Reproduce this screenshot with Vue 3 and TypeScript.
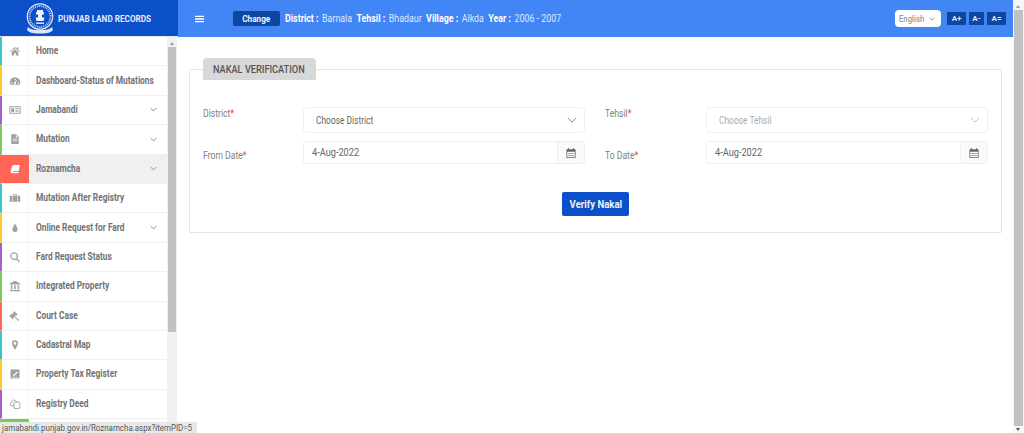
<script setup lang="ts">
interface MenuItem {
  label: string
  icon: string
  color: string
  arrow?: boolean
  active?: boolean
  filled?: boolean
}

const menu: MenuItem[] = [
  { label: 'Home', icon: 'home', color: '#3cc4c8' },
  { label: 'Dashboard-Status of Mutations', icon: 'gauge', color: '#ffc928' },
  { label: 'Jamabandi', icon: 'card', color: '#a45fc8', arrow: true },
  { label: 'Mutation', icon: 'file', color: '#7cc85c', arrow: true },
  { label: 'Roznamcha', icon: 'book', color: '#ff6655', arrow: true, active: true, filled: true },
  { label: 'Mutation After Registry', icon: 'case', color: '#3cc4c8' },
  { label: 'Online Request for Fard', icon: 'drop', color: '#ffc928', arrow: true },
  { label: 'Fard Request Status', icon: 'search', color: '#a45fc8' },
  { label: 'Integrated Property', icon: 'bank', color: '#7cc85c' },
  { label: 'Court Case', icon: 'gavel', color: '#ff6655' },
  { label: 'Cadastral Map', icon: 'pin', color: '#3cc4c8' },
  { label: 'Property Tax Register', icon: 'tax', color: '#ffc928' },
  { label: 'Registry Deed', icon: 'copy', color: '#a45fc8' },
  { label: '', icon: '', color: '#7cc85c', filled: true },
]

const icons: Record<string, string> = {
  home: 'M8 2.500 1 8.500l.8.9L8 4.200l6.200 5.200.8-.9-2.500-2.100V3h-2v2L8 2.500ZM3.500 9.600V14h3.300v-3h2.400v3h3.300V9.600L8 5.800 3.500 9.600Z',
  gauge: 'M8 3a7 7 0 0 0-7 7c0 1.300.3 2.300 1 3h12c.7-.7 1-1.700 1-3a7 7 0 0 0-7-7Zm0 1.500a1 1 0 1 1 0 2 1 1 0 0 1 0-2ZM3.500 9.500a1 1 0 1 1 0 2 1 1 0 0 1 0-2Zm9 0a1 1 0 1 1 0 2 1 1 0 0 1 0-2ZM8 12.500a1.500 1.500 0 0 1-.6-2.900l2.300-3 .6.3-1.300 3.300A1.500 1.500 0 0 1 8 12.500Z',
  file: 'M3 1.500h6.500L13 5v9.500H3v-13Zm6 .9V5.500h3.100L9 2.400ZM5 7.500v1h6v-1H5Zm0 2.500v1h6v-1H5Z',
  book: 'M6 2.500h8.500l-1.500 8H5.500c-.8 0-1 1.200-.2 1.200h7.500l-.4 1.800H4c-1.500 0-2-1-1.700-2.300L4 4c.2-.9 1-1.500 2-1.500Z',
  case: 'M6 3h4c.6 0 1 .4 1 1v1h4v8H1V5h4V4c0-.6.4-1 1-1Zm.2 1.100V5h3.600v-.9H6.200ZM4 5v8h.8V5H4Zm7.200 0v8h.8V5h-.8Z',
  drop: 'M8 1.500c.6 2.500 3.500 5 3.500 8.300a3.500 3.500 0 0 1-7 0C4.500 6.500 7.400 4 8 1.500Z',
  search: 'M6.800 1.500a5.300 5.300 0 0 1 4.200 8.500l3.700 3.700-1.300 1.300-3.700-3.700A5.300 5.300 0 1 1 6.800 1.500Zm0 1.800a3.500 3.500 0 1 0 0 7 3.500 3.500 0 0 0 0-7Z',
  bank: 'M8 1 1 4.500V6h14V4.500L8 1ZM2.500 7v5h2V7h-2Zm4.500 0v5h2V7H7Zm4.500 0v5h2V7h-2ZM1.500 13 1 15h14l-.5-2h-13Z',
  gavel: 'M7 1.500 11.500 6 10 7.500 9.200 6.700 7.700 8.200l5.800 5.200-1.300 1.300-5.400-5.700-1.200 1.200.8.800-1.500 1.500L.5 7.500 2 6l.8.800 4-4L6 2l1-.5Z',
  pin: 'M8 1.500a4.200 4.200 0 0 1 4.200 4.200C12.200 8.300 9.300 11.500 8 14.500 6.700 11.500 3.800 8.300 3.800 5.700A4.200 4.200 0 0 1 8 1.500Zm0 2.200a2 2 0 1 0 0 4 2 2 0 0 0 0-4Z',
  tax: 'M2 2h12v12H2V2Zm8.700 2.500-4.900 4.900-.5 1.800 1.800-.5 4.900-4.900-1.300-1.300ZM3.500 12v.5h9V12h-9Z',
}
</script>

<template>
  <div class="page">
    <aside class="sidebar">
      <div class="brand">
        <svg class="emblem" viewBox="0 0 30 33" width="30" height="33">
          <circle cx="15" cy="14.500" r="12.700" fill="none" stroke="#e3eaf8" stroke-width="1.200" />
          <circle cx="15" cy="14.500" r="10.500" fill="none" stroke="#c9d7f2" stroke-width="2" stroke-dasharray="1 1" />
          <path d="M12 8h6v1.500l1 1v2h-2v3h2.500l-1 3.500h-7l-1-3.500H13v-3h-2v-2l1-1V8Z" fill="#eef2fb" />
          <path d="M10.500 20.500h9l-1 1.500h-7l-1-1.500Z" fill="#dfe7f7" />
          <path d="M3 25c3 3 7 3 12 3s9 0 12-3l1 3c-3 3.500-8 3.500-13 3.500S5 31.500 2 28l1-3Z" fill="#dfe7f7" />
        </svg>
        <span class="brand-name">PUNJAB LAND RECORDS</span>
      </div>
      <div class="menu-wrap">
        <ul class="menu">
          <li
            v-for="item in menu"
            :key="item.label"
            :class="['menu-item', { active: item.active }]"
            :style="{ borderLeftColor: item.color }"
          >
            <span :class="['menu-icon', { filled: item.filled }]" :style="item.filled ? { background: item.color } : {}">
              <svg v-if="item.icon === 'card'" viewBox="0 0 16 16" width="12" height="12">
                <path d="M.5 3h15v10H.5V3Zm1.300 1.300v7.400h12.400V4.300H1.800ZM3 5.500h4v5H3v-5Zm5.500 0H13v1H8.500v-1Zm0 2H13v1H8.500v-1Zm0 2H13v1H8.500v-1Z" fill="currentColor" />
              </svg>
              <svg v-else-if="item.icon === 'copy'" viewBox="0 0 16 16" width="12" height="12" fill="none" stroke="currentColor" stroke-width="1.200">
                <rect x="6.500" y="5.500" width="8" height="8.500" rx="1.500" />
                <path d="M6.500 10.500H3a1.500 1.500 0 0 1-1.500-1.500L4.500 3.200a1.500 1.500 0 0 1 2-.5L11 5.500" />
              </svg>
              <svg v-else-if="item.icon" viewBox="0 0 16 16" width="12" height="12">
                <path :d="icons[item.icon]" fill="currentColor" fill-rule="evenodd" />
              </svg>
            </span>
            <span class="menu-label"><span class="squeeze">{{ item.label }}</span></span>
            <svg v-if="item.arrow" class="menu-arrow" viewBox="0 0 10 6" width="7" height="5">
              <path d="M1 1l4 4 4-4" fill="none" stroke="currentColor" stroke-width="1.400" />
            </svg>
          </li>
        </ul>
        <div class="side-scroll">
          <span class="arrow-up"></span>
          <span class="side-thumb"></span>
        </div>
      </div>
    </aside>

    <div class="main">
      <header class="topbar">
        <svg class="burger" viewBox="0 0 10 8" width="9" height="8">
          <path d="M0 .5h10v1.400H0zM0 3.300h10v1.400H0zM0 6.100h10v1.400H0z" fill="#fff" />
        </svg>
        <button class="change"><span>Change</span></button>
        <div class="crumbs">
          <b>District :</b><span>Barnala</span>
          <b>Tehsil :</b><span>Bhadaur</span>
          <b>Village :</b><span>Alkda</span>
          <b>Year :</b><span>2006 - 2007</span>
        </div>
        <div class="top-right">
          <div class="lang">
            <span class="squeeze">English</span>
            <svg viewBox="0 0 10 6" width="6" height="4">
              <path d="M1 1l4 4 4-4" fill="none" stroke="#888" stroke-width="1.500" />
            </svg>
          </div>
          <div class="sizes">
            <button class="wide">A+</button>
            <button>A-</button>
            <button class="wide">A=</button>
          </div>
        </div>
      </header>

      <section class="content">
        <div class="panel">
          <h2 class="panel-title"><span>NAKAL VERIFICATION</span></h2>
          <div class="form-grid">
            <label class="lbl lbl-top"><span class="squeeze">District<em>*</em></span></label>
            <div class="select">
              <span class="squeeze">Choose District</span>
              <svg viewBox="0 0 12 7" width="10" height="6"><path d="M1 1l5 5 5-5" fill="none" stroke="#888" stroke-width="1.100" /></svg>
            </div>
            <label class="lbl lbl-top lbl-right"><span class="squeeze">Tehsil<em>*</em></span></label>
            <div class="select disabled">
              <span class="squeeze">Choose Tehsil</span>
              <svg viewBox="0 0 12 7" width="10" height="6"><path d="M1 1l5 5 5-5" fill="none" stroke="#bbb" stroke-width="1.100" /></svg>
            </div>

            <label class="lbl lbl-low"><span class="squeeze">From Date<em>*</em></span></label>
            <div class="date">
              <span class="date-value"><span>4-Aug-2022</span></span>
              <span class="date-btn">
                <svg viewBox="0 0 12 12" width="10" height="10"><path d="M2.500 0h1v1.500h5V0h1v1.500H11.500V12H.5V1.500h2V0ZM1.500 4.500v6.500h9V4.500h-9ZM3 6h1.300v1.200H3V6Zm2.300 0h1.300v1.200H5.300V6Zm2.400 0H9v1.200H7.700V6ZM3 8.300h1.300v1.200H3V8.300Zm2.300 0h1.300v1.200H5.300V8.300Zm2.400 0H9v1.200H7.700V8.300Z" fill="#666" fill-rule="evenodd" /></svg>
              </span>
            </div>
            <label class="lbl lbl-low lbl-right"><span class="squeeze">To Date<em>*</em></span></label>
            <div class="date">
              <span class="date-value"><span>4-Aug-2022</span></span>
              <span class="date-btn">
                <svg viewBox="0 0 12 12" width="10" height="10"><path d="M2.500 0h1v1.500h5V0h1v1.500H11.500V12H.5V1.500h2V0ZM1.500 4.500v6.500h9V4.500h-9ZM3 6h1.300v1.200H3V6Zm2.300 0h1.300v1.200H5.300V6Zm2.400 0H9v1.200H7.700V6ZM3 8.300h1.300v1.200H3V8.300Zm2.300 0h1.300v1.200H5.300V8.300Zm2.400 0H9v1.200H7.700V8.300Z" fill="#666" fill-rule="evenodd" /></svg>
              </span>
            </div>
          </div>
          <div class="actions">
            <button class="verify"><span>Verify Nakal</span></button>
          </div>
        </div>
      </section>
    </div>

    <div class="page-scroll">
      <span class="arrow-up"></span>
      <span class="page-thumb"></span>
      <span class="arrow-down"></span>
    </div>

    <div class="status"><span>jamabandi.punjab.gov.in/Roznamcha.aspx?itemPID=5</span></div>
  </div>
</template>

<style>
html,
body {
  margin: 0;
  overflow: hidden;
}
</style>

<style scoped>
.page {
  position: relative;
  display: flex;
  width: 1024px;
  height: 433px;
  overflow: hidden;
  background: #fff;
  font-family: Roboto, "Liberation Sans", sans-serif;
  color: #666;
}

/* the text in this layout runs narrow, no condensed face is installed */
.squeeze,
.brand-name,
.change span,
.panel-title span,
.date-value span,
.verify span,
.status span {
  display: inline-block;
  white-space: nowrap;
  transform: scaleX(0.86);
  transform-origin: left center;
}

.change span,
.verify span {
  transform-origin: center;
}

/* SIDEBAR */
.sidebar {
  width: 178px;
  flex: none;
  display: flex;
  flex-direction: column;
}

.brand {
  height: 36px;
  flex: none;
  display: flex;
  align-items: center;
  gap: 3px;
  padding-left: 25px;
  background: #0b4fc9;
  color: #e6ecf9;
  font-size: 9.500px;
  font-weight: 700;
  overflow: hidden;
}

.emblem {
  flex: none;
}

.menu-wrap {
  flex: 1;
  display: flex;
  min-height: 0;
  border-top: 1px solid #e4e9f2;
}

.menu {
  width: 167px;
  margin: 0;
  padding: 0;
  list-style: none;
  overflow: hidden;
}

.menu-item {
  box-sizing: border-box;
  height: 29.4px;
  display: flex;
  align-items: center;
  border-left: 2px solid;
  border-bottom: 1px solid #f0f0f0;
  font-size: 10px;
  font-weight: 700;
  color: #727272;
}

.menu-item.active {
  background: #f0f0f0;
}

.menu-icon {
  width: 27px;
  height: 100%;
  flex: none;
  display: flex;
  align-items: center;
  justify-content: center;
  margin-right: 7px;
  color: #a0a0a0;
  border-right: 1px solid #f8f8f8;
  box-sizing: border-box;
}

.menu-icon.filled {
  color: #fff;
  margin-left: -2px;
  width: 29px;
  border-right: 0;
}

.menu-label {
  flex: 1;
  min-width: 0;
  white-space: nowrap;
  padding-bottom: 1px;
}

.menu-label .squeeze {
  transform: scaleX(0.835);
}

.menu-arrow {
  flex: none;
  margin-right: 10px;
  color: #888;
}

.side-scroll,
.page-scroll {
  position: relative;
  flex: none;
  background: #f1f1f1;
}

.side-scroll {
  width: 10px;
}

.page-scroll {
  width: 11px;
  background: #f6f6f6;
}

.arrow-up,
.arrow-down {
  position: absolute;
  left: 3px;
  border-left: 2.500px solid transparent;
  border-right: 2.500px solid transparent;
}

.arrow-up {
  top: 5px;
  border-bottom: 3px solid #9a9a9a;
}

.arrow-down {
  bottom: 2px;
  border-top: 3px solid #555;
}

.side-thumb {
  position: absolute;
  top: 10px;
  left: 1px;
  width: 8px;
  height: 285px;
  background: #c1c1c1;
}

.page-thumb {
  position: absolute;
  top: 10px;
  left: 1px;
  width: 9px;
  height: 416px;
  background: #c1c1c1;
}

/* TOP BAR */
.main {
  flex: 1;
  min-width: 0;
  display: flex;
  flex-direction: column;
}

.topbar {
  height: 37px;
  flex: none;
  display: flex;
  align-items: center;
  padding: 0 7px 0 17px;
  background: #4285f4;
  color: #fff;
  font-size: 10px;
}

.burger {
  flex: none;
  margin-right: 29px;
}

.change {
  flex: none;
  width: 47px;
  height: 15px;
  padding: 0;
  margin-right: 5px;
  border: 0;
  border-radius: 2px;
  background: #0d47a1;
  color: #eef3fc;
  font: 700 9.500px Roboto, sans-serif;
}

.crumbs {
  display: flex;
  align-items: center;
  white-space: nowrap;
  color: #dfe9fb;
  transform: scaleX(0.885);
  transform-origin: left center;
}

.crumbs b {
  color: #fff;
  margin-right: 4px;
}

.crumbs span {
  margin-right: 5px;
}

.top-right {
  margin-left: auto;
  display: flex;
  align-items: center;
  gap: 6px;
}

.lang {
  box-sizing: border-box;
  width: 46px;
  height: 17px;
  display: flex;
  align-items: center;
  justify-content: space-between;
  padding: 0 6px 0 4px;
  border-radius: 4px;
  background: #fff;
  color: #999;
  font-size: 9px;
  font-weight: 500;
}

.sizes {
  display: flex;
  gap: 3px;
}

.sizes button {
  width: 15px;
  height: 13px;
  padding: 0;
  border: 0;
  background: #0d47a1;
  color: #dfe6f5;
  font: 700 8px Roboto, sans-serif;
}

.sizes button.wide {
  width: 19px;
}

/* FORM */
.content {
  flex: 1;
  padding: 32px 11px 0 11px;
}

.panel {
  position: relative;
  box-sizing: border-box;
  height: 164px;
  border: 1px solid #e3e3e3;
  border-radius: 2px;
  padding: 37px 13px 0;
}

.panel-title {
  position: absolute;
  top: -12px;
  left: 13px;
  margin: 0;
  box-sizing: border-box;
  width: 113px;
  padding-left: 10px;
  height: 22px;
  line-height: 23px;
  border-radius: 4px 4px 0 0;
  background: #d8d8d8;
  color: #555;
  font-size: 10px;
  font-weight: 500;
  white-space: nowrap;
}

.panel-title span {
  transform: scaleX(0.92);
}

.form-grid {
  display: grid;
  grid-template-columns: 100px 282px 1fr 282px;
  row-gap: 8px;
}

.lbl {
  font-size: 10px;
  color: #808080;
}

.lbl-right {
  padding-left: 20px;
}

.lbl em {
  color: #e04848;
  font-style: normal;
}

.lbl-top {
  padding-top: 1px;
}

.lbl-low {
  padding-top: 9px;
}

.select {
  box-sizing: border-box;
  height: 26px;
  display: flex;
  align-items: center;
  justify-content: space-between;
  padding: 0 7px 0 12px;
  border: 1px solid #f0f0f0;
  border-radius: 4px;
  background: #fff;
  color: #666;
  font-size: 10px;
}

.select .squeeze {
  transform: scaleX(0.84);
}

.select.disabled {
  color: #aaa;
}

.date {
  box-sizing: border-box;
  height: 23px;
  display: flex;
  border: 1px solid #eef0f2;
  border-radius: 3px;
}

.date-value {
  flex: 1;
  display: flex;
  align-items: center;
  padding-left: 8px;
  font-size: 10px;
  color: #666;
}

.date-value span {
  transform: scaleX(0.92);
}

.date-btn {
  width: 26px;
  display: flex;
  align-items: center;
  justify-content: center;
  background: #f8fafb;
  border-left: 1px solid #eef0f2;
}

.actions {
  display: flex;
  justify-content: center;
  margin-top: 28px;
}

.verify {
  width: 67px;
  height: 24px;
  padding: 0;
  border: 0;
  border-radius: 2px;
  background: #0b50c8;
  color: #eef3fc;
  font: 700 10.500px Roboto, sans-serif;
}

.verify span {
  transform: scaleX(0.91);
}

.status {
  position: absolute;
  left: 0;
  bottom: 0;
  width: 197px;
  height: 11px;
  line-height: 12px;
  padding-left: 2px;
  box-sizing: border-box;
  background: #e8e8e8;
  color: #555;
  font-size: 9px;
  white-space: nowrap;
  overflow: hidden;
}

.status span {
  transform: scaleX(0.88);
}
</style>
